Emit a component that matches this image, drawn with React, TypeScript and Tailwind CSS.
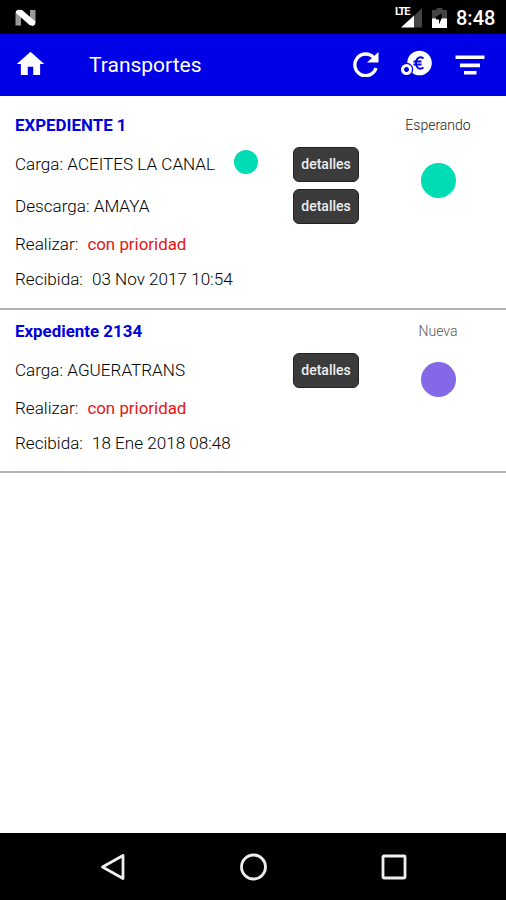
import React from "react";

type Stop = { label: string; place: string; active?: boolean };

type Transport = {
  title: string;
  stops: Stop[];
  priority: string;
  received: string;
  status: string;
  listCls: string;
  statusCls: string;
  dotCls: string;
};

const transports: Transport[] = [
  {
    title: "EXPEDIENTE 1",
    stops: [
      { label: "Carga:", place: "ACEITES LA CANAL", active: true },
      { label: "Descarga:", place: "AMAYA" },
    ],
    priority: "con prioridad",
    received: "03 Nov 2017 10:54",
    status: "Esperando",
    listCls: "pt-3 pb-[11px]",
    statusCls: "text-[#222222]",
    dotCls: "mt-5 bg-[#00dcb4]",
  },
  {
    title: "Expediente 2134",
    stops: [{ label: "Carga:", place: "AGUERATRANS" }],
    priority: "con prioridad",
    received: "18 Ene 2018 08:48",
    status: "Nueva",
    listCls: "pt-1 pb-2.5",
    statusCls: "text-[#555555]",
    dotCls: "mt-[13px] bg-[#8468e8]",
  },
];

function StatusBar() {
  return (
    <div className="flex h-[34px] shrink-0 items-center bg-black pr-[11px] pl-[15px] pt-px text-white">
      <svg width="22" height="18" viewBox="0 0 22 18">
        <path d="M0.5 2.5L6 6V16.5H0.5zM15 1h5.500v12L15 10z" fill="#999999" />
        <path d="M1 2Q3 0 7 1L20.500 12.500Q20.500 16 18 17L14.500 16L1 4z" fill="#ffffff" />
      </svg>
      {/* signal */}
      <div className="relative ml-auto h-5 w-[27px]">
        <svg className="absolute top-0 left-0" width="27" height="20" viewBox="0 0 27 20">
          <path d="M27 0V19.500H19V8z" fill="#444444" />
          <path d="M19 7.500V19.500H6z" fill="#ffffff" />
        </svg>
        <span className="absolute -top-px left-0 bg-black text-[11px] leading-[10px] font-bold tracking-[-1.2px]">
          LTE
        </span>
      </div>
      {/* battery */}
      <svg className="ml-[10px]" width="15" height="20" viewBox="0 0 15 20">
        <path d="M4.500 0h6v2H15v9H0V2h4.500z" fill="#444444" />
        <path d="M0 10.500h15V20H0z" fill="#ffffff" />
        <path d="M4 8.500L9.500 5.500L10 9.500L7 16.500V11.500H4z" fill="#000000" />
      </svg>
      <span className="ml-[9px] w-[39px] text-[20px] leading-5 font-medium whitespace-nowrap">8:48</span>
    </div>
  );
}

function Toolbar() {
  return (
    <header className="flex h-[62px] shrink-0 items-center bg-[#0000e6] pr-5 pl-[14px] text-white">
      <button aria-label="Inicio" className="-mt-0.5">
        <svg width="33" height="34" viewBox="0 0 24 24" fill="currentColor">
          <path d="M10 20v-6h4v6h5v-8h3L12 3 2 12h3v8z" />
        </svg>
      </button>
      <h1 className="-mt-px ml-[42px] text-[21px] leading-7">Transportes</h1>
      <button aria-label="Actualizar" className="-mt-0.5 ml-auto">
        <svg width="27" height="25" viewBox="0 0 27 25">
          <path d="M22 6A10.800 10.800 0 1 0 24 16" fill="none" stroke="#ffffff" strokeWidth="3.400" />
          <path d="M26.500 0V10.500H15z" fill="#ffffff" />
        </svg>
      </button>
      <button aria-label="Gastos" className="-mt-0.5 ml-[22px]">
        <svg width="32" height="28" viewBox="0 0 32 28">
          <circle cx="18.500" cy="13" r="12.300" fill="#ffffff" />
          <circle cx="5.500" cy="19.500" r="6.800" fill="#0000e6" />
          <circle cx="5.500" cy="19.500" r="5.500" fill="#ffffff" />
          <path d="M5.500 17v5M3 19.500h5" stroke="#0000e6" strokeWidth="2.600" />
          <path
            d="M22.500 8.500C18.500 5.500 15 8.500 15 13S18.500 20.500 22.500 17.500M12.500 11.500h8M12.500 14.500h8"
            fill="none"
            stroke="#0000e6"
            strokeWidth="1.800"
          />
        </svg>
      </button>
      <button aria-label="Filtrar" className="ml-[20px]">
        <svg width="33" height="24" viewBox="0 0 33 24" fill="currentColor">
          <path d="M2.500 2.500h29v3.500H2.500zM7 10.500h20v3.800h-20zM11 18h12.500v3.500H11z" />
        </svg>
      </button>
    </header>
  );
}

function TransportCard({ item }: { item: Transport }) {
  return (
    <article className={`flex border-b-2 border-[#b2b2b2] pl-[15px] ${item.listCls}`}>
      <div className="w-[344px] text-[17.1px] font-light text-black">
        <h2 className="flex h-[35px] items-center text-[16.900px] font-bold text-[#0000dc]">{item.title}</h2>
        {item.stops.map((stop) => (
          <div key={stop.label} className="flex h-[42px] items-center">
            <span className="pt-0.5 whitespace-nowrap">
              {stop.label} {stop.place}
            </span>
            {stop.active && <span className="mb-1 ml-[19px] size-6 rounded-full bg-[#00dcb4]" />}
            <button className="ml-auto h-[35px] w-[66px] rounded-md border border-[#222222] bg-[#3b3b3b] text-[14px] font-medium text-[#eeeeee]">
              detalles
            </button>
          </div>
        ))}
        <p className="flex h-[35px] items-center gap-[9px]">
          <span>Realizar:</span>
          <span className="text-[16.900px] font-normal text-[#e61414]">{item.priority}</span>
        </p>
        <p className="flex h-[35px] items-center gap-[9px] pt-px">
          <span>Recibida:</span>
          <span>{item.received}</span>
        </p>
      </div>
      <div className="ml-[29px] flex w-[100px] flex-col items-center">
        <span className={`flex h-[35px] items-center text-[14px] font-light ${item.statusCls}`}>{item.status}</span>
        <span className={`size-[35px] rounded-full ${item.dotCls}`} />
      </div>
    </article>
  );
}

function SystemNav() {
  return (
    <nav className="flex h-[67px] shrink-0 items-center justify-between bg-black pr-[98px] pl-[99px]">
      <svg width="28" height="30" viewBox="0 0 28 30" fill="none" stroke="#eeeeee" strokeWidth="2.800">
        <path d="M24 3.500v23L3.500 15z" strokeLinejoin="round" />
      </svg>
      <svg width="30" height="30" viewBox="0 0 30 30" fill="none" stroke="#eeeeee" strokeWidth="2.800">
        <circle cx="14.500" cy="15" r="12" />
      </svg>
      <svg width="28" height="28" viewBox="0 0 28 28" fill="none" stroke="#eeeeee" strokeWidth="2.800">
        <rect x="3" y="3" width="22" height="22" rx="1" />
      </svg>
    </nav>
  );
}

export default function App() {
  return (
    <div className="flex h-[900px] w-[506px] flex-col overflow-hidden bg-white font-[Roboto,sans-serif]">
      <StatusBar />
      <Toolbar />
      <main className="flex-1 bg-white">
        {transports.map((item) => (
          <TransportCard key={item.title} item={item} />
        ))}
      </main>
      <SystemNav />
    </div>
  );
}
